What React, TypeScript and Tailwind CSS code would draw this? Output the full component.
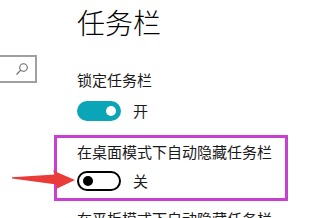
import React from 'react';

const font = { fontFamily: '"Noto Sans CJK SC", "Microsoft YaHei", sans-serif' };

function Toggle({ on }: { on: boolean }) {
  return on ? (
    <div className="flex h-[20px] w-[44px] items-center justify-end rounded-full bg-[#0aa5b6] pr-[5px]">
      <div className="h-[10px] w-[10px] rounded-full bg-white" />
    </div>
  ) : (
    <div className="flex h-[20px] w-[44px] items-center rounded-full border-2 border-black pl-[4px]">
      <div className="h-[10px] w-[10px] rounded-full bg-black" />
    </div>
  );
}

export default function App() {
  return (
    <div className="relative flex h-[218px] w-[328px] overflow-hidden bg-white text-[#1a1a1a]" style={font}>
      <div className="w-[54px] shrink-0 pt-[55px]">
        <div className="flex h-[28px] w-[37px] items-center justify-end border-2 border-l-0 border-[#a0a0a0] pr-[6px]">
          <svg width="14" height="14" viewBox="0 0 14 14" fill="none" stroke="#666" strokeWidth="1.1">
            <circle cx="8.5" cy="5.5" r="3.8" />
            <path d="M5.8 8.2 L1.5 12.5" />
          </svg>
        </div>
      </div>

      <div className="flex flex-col">
        <h1 className="mt-[7px] pl-[23px] text-[28px] font-light leading-[30px] text-black">任务栏</h1>

        <p className="mt-[33px] pl-[23px] text-[15px] leading-[20px]">锁定任务栏</p>
        <div className="mt-[11px] flex items-center gap-[12px] pl-[23px]">
          <Toggle on />
          <span className="text-[15px] leading-[20px]">开</span>
        </div>

        <div className="mt-[14px] w-[234px] border-[3px] border-[#c93fd1] pb-[7px] pl-[20px] pt-[4px]">
          <p className="text-[15px] leading-[20px]">在桌面模式下自动隐藏任务栏</p>
          <div className="mt-[9px] flex items-center gap-[12px]">
            <Toggle on={false} />
            <span className="text-[15px] leading-[20px]">关</span>
          </div>
        </div>

        <p className="mt-[8px] whitespace-nowrap pl-[23px] text-[15px] leading-[20px]">在平板模式下自动隐藏任务栏</p>
      </div>

      <svg className="absolute left-0 top-[160px]" width="80" height="40" viewBox="0 160 80 40">
        <polygon
          points="12,177.2 55,174.5 53,170.5 75,180 56,189 56.5,184.5 12,178.4"
          fill="#ea3b3b"
        />
      </svg>
    </div>
  );
}
